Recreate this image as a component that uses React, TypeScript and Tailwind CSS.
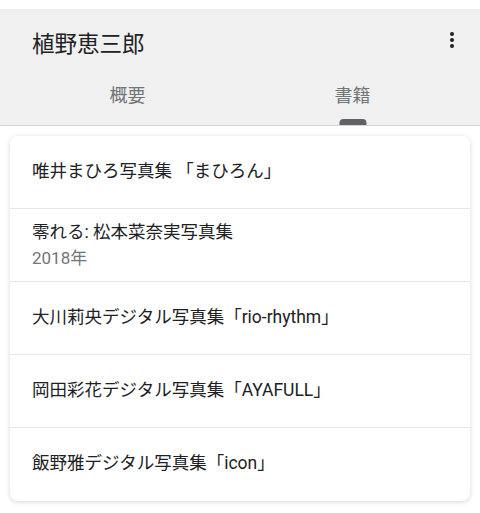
import React from "react";

const rows: { title: string; sub?: string }[] = [
  { title: "唯井まひろ写真集 「まひろん」" },
  { title: "零れる: 松本菜奈実写真集", sub: "2018年" },
  { title: "大川莉央デジタル写真集「rio-rhythm」" },
  { title: "岡田彩花デジタル写真集「AYAFULL」" },
  { title: "飯野雅デジタル写真集「icon」" },
];

export default function App() {
  return (
    <div
      className="w-[480px] h-[513px] bg-white overflow-hidden"
      style={{ fontFamily: "Roboto, 'Noto Sans CJK JP', sans-serif" }}
    >
      <div className="h-[9px] bg-white" />
      <div className="bg-[#f0f0f0] border-b border-[#d4d4d4]">
        <div className="h-[52px] flex justify-between pl-[32px] pr-[16px]">
          <div className="pt-[20px] text-[22.5px] leading-[30px] text-[#202124]">植野恵三郎</div>
          <svg width="24" height="24" viewBox="0 0 24 24" className="mt-[19px]" fill="#202124">
            <circle cx="12" cy="6" r="2" />
            <circle cx="12" cy="12" r="2" />
            <circle cx="12" cy="18" r="2" />
          </svg>
        </div>
        <div className="h-[64px] grid grid-cols-2 px-[15px]">
          <div className="flex items-start justify-center pt-[23px] text-[18px] leading-[24px] text-[#70757a]">
            概要
          </div>
          <div className="relative flex items-start justify-center pt-[23px] text-[18px] leading-[24px] text-[#70757a]">
            書籍
            <div className="absolute bottom-0 left-1/2 -translate-x-1/2 w-[27px] h-[6px] rounded-t-[4px] bg-[#5f6368]" />
          </div>
        </div>
      </div>
      <div className="mt-[10px] mx-[10px] bg-white rounded-[8px] shadow-[0_1px_5px_rgba(0,0,0,0.16)] overflow-hidden">
        {rows.map((r, i) => (
          <div
            key={i}
            className={`h-[73px] pl-[22px] ${i < rows.length - 1 ? "border-b border-[#e8e8e8]" : ""} ${
              r.sub ? "pt-[11px]" : "pt-[23px]"
            }`}
          >
            <div className={`text-[17.5px] text-[#202124] ${r.sub ? "leading-[25px]" : "leading-[24px]"}`}>{r.title}</div>
            {r.sub && <div className="text-[17px] leading-[26px] text-[#70757a]">{r.sub}</div>}
          </div>
        ))}
      </div>
    </div>
  );
}
